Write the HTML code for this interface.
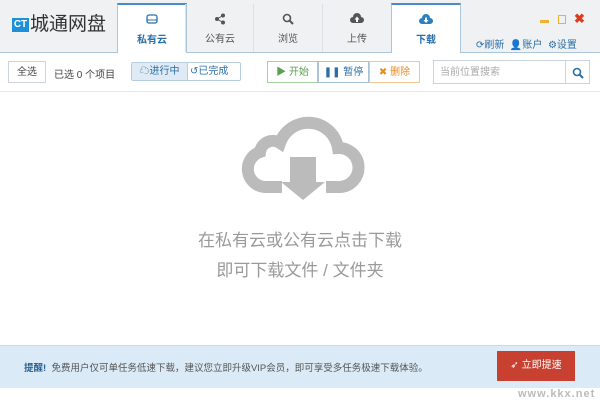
<!DOCTYPE html><html><head><meta charset="utf-8"><style>
body{margin:0;width:600px;height:403px;overflow:hidden;background:#fff;font-family:"Liberation Sans","Noto Sans CJK SC",sans-serif;position:relative;font-size:10px;color:#444}
.a{position:absolute}
.hdr{left:0;top:0;width:600px;height:52px;background:#eff1f3;border-bottom:1px solid #aac6dc}
.tab{top:4px;height:48px;width:68px;border-left:1px solid #dde1e5;text-align:center;color:#555;font-size:10px}
.tab .ic{height:26px;padding-top:9px;box-sizing:border-box}
.tab.act{background:#fff;border-top:2px solid #4a8bc2;border-left:1px solid #aac6dc;border-right:1px solid #aac6dc;height:48px;top:3px;color:#2a6fa8;font-weight:bold}
.btn{border:1px solid #ccd3da;background:#fff;height:22px;line-height:22px;box-sizing:border-box;font-size:10px;text-align:center}
</style></head><body>
<div class="a hdr"></div>
<div class="a" style="left:12px;top:18px;width:17px;height:14px;background:#1f8fd8;color:#fff;font-size:10px;font-weight:bold;line-height:14px;text-align:center">CT</div>
<div class="a" style="left:30px;top:13px;font-size:19px;color:#333;line-height:24px">城通网盘</div>
<div class="a tab act" style="left:117px"><div class="ic"><svg width="12" height="10"><rect x="1" y="1" width="10" height="8" rx="2" fill="none" stroke="#2a6fa8" stroke-width="1.3"/><line x1="1" y1="6" x2="11" y2="6" stroke="#2a6fa8"/></svg></div>私有云</div>
<div class="a tab" style="left:185px"><div class="ic"><svg width="12" height="12"><circle cx="9" cy="2.5" r="2" fill="#555"/><circle cx="3" cy="6" r="2" fill="#555"/><circle cx="9" cy="9.5" r="2" fill="#555"/><path d="M9 2.5L3 6L9 9.5" stroke="#555" fill="none"/></svg></div>公有云</div>
<div class="a tab" style="left:253px"><div class="ic"><svg width="12" height="12"><circle cx="5" cy="5" r="3.5" fill="none" stroke="#555" stroke-width="1.6"/><line x1="7.5" y1="7.5" x2="11" y2="11" stroke="#555" stroke-width="2"/></svg></div>浏览</div>
<div class="a tab" style="left:322px"><div class="ic"><svg width="14" height="11"><path d="M3 10a3 3 0 0 1 0-6a4 4 0 0 1 8 0a3 3 0 0 1 0 6z" fill="#555"/><path d="M7 3.5L4.5 6.5H6V9H8V6.5H9.5z" fill="#fff"/></svg></div>上传</div>
<div class="a tab act" style="left:391px"><div class="ic"><svg width="14" height="11"><path d="M3 10a3 3 0 0 1 0-6a4 4 0 0 1 8 0a3 3 0 0 1 0 6z" fill="#2a80c0"/><path d="M7 9L4.5 6H6V3.5H8V6H9.5z" fill="#fff"/></svg></div>下载</div>
<div class="a" style="left:540px;top:20px;width:9px;height:3px;background:#f0b030"></div>
<div class="a" style="left:558px;top:15px;width:8px;height:9px;border:1px solid #f0b030;box-sizing:border-box"></div>
<div class="a" style="left:574px;top:11px;color:#e03a1e;font-size:13px;font-weight:bold">✖</div>
<div class="a" style="left:476px;top:36px;color:#2a6fa8;font-size:10px">⟳刷新 &nbsp;👤账户 &nbsp;⚙设置</div>
<div class="a btn" style="left:8px;top:61px;width:38px">全选</div>
<div class="a" style="left:54px;top:66px;font-size:10px">已选 0 个项目</div>
<div class="a btn" style="left:131px;top:62px;width:110px;height:19px;border-color:#b7cde0;border-radius:2px"></div>
<div class="a" style="left:132px;top:63px;width:55px;height:17px;background:#dfeaf4;line-height:17px;color:#2a6fa8;text-align:center;font-size:10px;border-right:1px solid #b7cde0">☁进行中</div>
<div class="a" style="left:190px;top:63px;line-height:17px;color:#2a6fa8;font-size:10px">↺已完成</div>
<div class="a btn" style="left:267px;top:61px;width:51px;border-color:#a8d0a0;color:#5aa050">▶ 开始</div>
<div class="a btn" style="left:318px;top:61px;width:51px;border-color:#a8c2d8;color:#2a6fa8">❚❚ 暂停</div>
<div class="a btn" style="left:369px;top:61px;width:51px;border-color:#f2c690;color:#e88a20">✖ 删除</div>
<div class="a btn" style="left:433px;top:60px;width:133px;height:24px;text-align:left;padding-left:6px;color:#aaa;line-height:24px">当前位置搜索</div>
<div class="a btn" style="left:565px;top:60px;width:25px;height:24px"><svg width="12" height="12" style="margin-top:6px"><circle cx="5" cy="5" r="3.5" fill="none" stroke="#2a6fa8" stroke-width="1.6"/><line x1="7.5" y1="7.5" x2="11" y2="11" stroke="#2a6fa8" stroke-width="2"/></svg></div>
<div class="a" style="left:0;top:91px;width:600px;height:1px;background:#e5e8eb"></div>
<svg class="a" style="left:230px;top:110px" width="140" height="95"><path d="M52 77H35A18 18 0 0 1 30 42A13 13 0 0 1 50 33A30 30 0 0 1 108 38A19.5 19.5 0 0 1 110 77H96" fill="none" stroke="#bbb" stroke-width="12"/><path d="M60 47H86V72H95L73 90L51 72H60z" fill="#bbb"/></svg>
<div class="a" style="left:0;top:226px;width:600px;text-align:center;font-size:17px;color:#9a9a9a;line-height:30px">在私有云或公有云点击下载<br>即可下载文件 / 文件夹</div>
<div class="a" style="left:0;top:345px;width:600px;height:42px;background:#daeaf6;border-top:1px solid #c8dcec"></div>
<div class="a" style="left:24px;top:360px;font-size:9.5px;color:#555"><b style="color:#2a5f90">提醒!</b> &nbsp;免费用户仅可单任务低速下载，建议您立即升级VIP会员，即可享受多任务极速下载体验。</div>
<div class="a" style="left:497px;top:351px;width:78px;height:30px;background:#c84030;color:#fff;font-size:10px;line-height:30px;text-align:center">➶ 立即提速</div>
<div class="a" style="left:518px;top:388px;color:#bbb;font-size:11px;font-weight:bold;letter-spacing:1px">www.kkx.net</div>
</body></html>
